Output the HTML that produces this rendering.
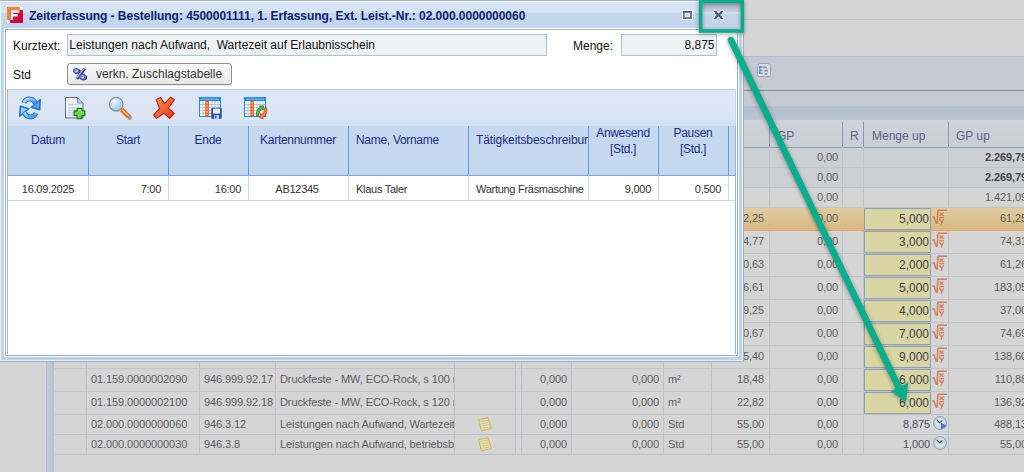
<!DOCTYPE html>
<html><head><meta charset="utf-8">
<style>
*{box-sizing:border-box;margin:0;padding:0}
html,body{width:1024px;height:472px;overflow:hidden}
body{position:relative;background:#d5d5d5;font-family:"Liberation Sans",sans-serif;font-size:11px;color:#5a5a5a}
.a{position:absolute}
.t{position:absolute;white-space:nowrap;line-height:14px}
.bd{font-weight:bold}
.dt{font-size:11px;letter-spacing:-0.28px;color:#333}
.bgt{font-size:11px;letter-spacing:-0.1px;color:#5c5c5c}
.hd{font-size:12px;letter-spacing:-0.3px;color:#1c2c86}
.bh{font-size:12px;color:#5d6382}
</style></head><body>

<div class="a" style="left:0px;top:19px;width:1024px;height:1px;background:#bcc4cf"></div>
<div class="a" style="left:0px;top:56px;width:1024px;height:1px;background:#b4bdcb"></div>
<div class="a" style="left:0px;top:57px;width:1024px;height:31px;background:#c5c9d1"></div>
<div class="a" style="left:0px;top:88px;width:1024px;height:1px;background:#d0d2d6"></div>
<div class="a" style="left:0px;top:89px;width:1024px;height:1px;background:#c3bfc3"></div>
<div class="a" style="left:0px;top:90px;width:1024px;height:1px;background:#8191b0"></div>
<div class="a" style="left:0px;top:91px;width:1024px;height:15px;background:#c5cad3"></div>
<div class="a" style="left:0px;top:106px;width:1024px;height:14px;background:linear-gradient(#b3becf,#bcc5d2)"></div>
<div class="a" style="left:0px;top:120px;width:1024px;height:1px;background:#cfd2d7"></div>
<div class="a" style="left:46px;top:121px;width:8px;height:351px;background:linear-gradient(90deg,#b3b9c1 0,#c3cbd6 20%,#bac4d0 80%,#b7bdc5 100%)"></div>
<div class="a" style="left:54px;top:121px;width:970px;height:26px;background:linear-gradient(#d0d3d9,#c9cdd4)"></div>
<div class="a" style="left:54px;top:147px;width:970px;height:1px;background:#8f9fbb"></div>
<div class="a" style="left:55px;top:148px;width:969px;height:39px;background:#cdd0d3"></div>
<div class="a" style="left:55px;top:208px;width:969px;height:22px;background:linear-gradient(#e0cba0,#d9b985)"></div>
<div class="a" style="left:55px;top:230px;width:969px;height:1px;background:#e3a465"></div>
<div class="a" style="left:55px;top:167px;width:969px;height:1px;background:#bfc3cb"></div>
<div class="a" style="left:55px;top:187px;width:969px;height:1px;background:#bfc3cb"></div>
<div class="a" style="left:55px;top:207px;width:969px;height:1px;background:#bfc3cb"></div>
<div class="a" style="left:55px;top:253px;width:969px;height:1px;background:#bfc3cb"></div>
<div class="a" style="left:55px;top:276px;width:969px;height:1px;background:#bfc3cb"></div>
<div class="a" style="left:55px;top:299px;width:969px;height:1px;background:#bfc3cb"></div>
<div class="a" style="left:55px;top:322px;width:969px;height:1px;background:#bfc3cb"></div>
<div class="a" style="left:55px;top:345px;width:969px;height:1px;background:#bfc3cb"></div>
<div class="a" style="left:55px;top:368px;width:969px;height:1px;background:#bfc3cb"></div>
<div class="a" style="left:55px;top:391px;width:969px;height:1px;background:#bfc3cb"></div>
<div class="a" style="left:55px;top:414px;width:969px;height:1px;background:#bfc3cb"></div>
<div class="a" style="left:55px;top:434px;width:969px;height:1px;background:#bfc3cb"></div>
<div class="a" style="left:55px;top:454px;width:969px;height:1px;background:#bfc3cb"></div>
<div class="a" style="left:86px;top:148px;width:1px;height:60px;background:#bfc3cb"></div>
<div class="a" style="left:86px;top:231px;width:1px;height:224px;background:#bfc3cb"></div>
<div class="a" style="left:199px;top:148px;width:1px;height:60px;background:#bfc3cb"></div>
<div class="a" style="left:199px;top:231px;width:1px;height:224px;background:#bfc3cb"></div>
<div class="a" style="left:275px;top:148px;width:1px;height:60px;background:#bfc3cb"></div>
<div class="a" style="left:275px;top:231px;width:1px;height:224px;background:#bfc3cb"></div>
<div class="a" style="left:454px;top:148px;width:1px;height:60px;background:#bfc3cb"></div>
<div class="a" style="left:454px;top:231px;width:1px;height:224px;background:#bfc3cb"></div>
<div class="a" style="left:515px;top:148px;width:1px;height:60px;background:#bfc3cb"></div>
<div class="a" style="left:515px;top:231px;width:1px;height:224px;background:#bfc3cb"></div>
<div class="a" style="left:521px;top:148px;width:1px;height:60px;background:#bfc3cb"></div>
<div class="a" style="left:521px;top:231px;width:1px;height:224px;background:#bfc3cb"></div>
<div class="a" style="left:571px;top:148px;width:1px;height:60px;background:#bfc3cb"></div>
<div class="a" style="left:571px;top:231px;width:1px;height:224px;background:#bfc3cb"></div>
<div class="a" style="left:663px;top:148px;width:1px;height:60px;background:#bfc3cb"></div>
<div class="a" style="left:663px;top:231px;width:1px;height:224px;background:#bfc3cb"></div>
<div class="a" style="left:711px;top:148px;width:1px;height:60px;background:#bfc3cb"></div>
<div class="a" style="left:711px;top:231px;width:1px;height:224px;background:#bfc3cb"></div>
<div class="a" style="left:769px;top:148px;width:1px;height:60px;background:#bfc3cb"></div>
<div class="a" style="left:769px;top:231px;width:1px;height:224px;background:#bfc3cb"></div>
<div class="a" style="left:842px;top:148px;width:1px;height:60px;background:#bfc3cb"></div>
<div class="a" style="left:842px;top:231px;width:1px;height:224px;background:#bfc3cb"></div>
<div class="a" style="left:863px;top:148px;width:1px;height:60px;background:#bfc3cb"></div>
<div class="a" style="left:863px;top:231px;width:1px;height:224px;background:#bfc3cb"></div>
<div class="a" style="left:948px;top:148px;width:1px;height:60px;background:#bfc3cb"></div>
<div class="a" style="left:948px;top:231px;width:1px;height:224px;background:#bfc3cb"></div>
<div class="a" style="left:769px;top:121px;width:1px;height:27px;background:#cbcfd5"></div>
<div class="a" style="left:769px;top:122px;width:1px;height:25px;background:#8797b5"></div>
<div class="a" style="left:842px;top:121px;width:1px;height:27px;background:#cbcfd5"></div>
<div class="a" style="left:842px;top:122px;width:1px;height:25px;background:#8797b5"></div>
<div class="a" style="left:863px;top:121px;width:1px;height:27px;background:#cbcfd5"></div>
<div class="a" style="left:863px;top:122px;width:1px;height:25px;background:#8797b5"></div>
<div class="a" style="left:948px;top:121px;width:1px;height:27px;background:#cbcfd5"></div>
<div class="a" style="left:948px;top:122px;width:1px;height:25px;background:#8797b5"></div>
<div class="t bh" style="left:777px;top:129px;">GP</div>
<div class="t bh" style="left:850px;top:129px;">R</div>
<div class="t bh" style="left:872px;top:129px;">Menge up</div>
<div class="t bh" style="left:956px;top:129px;">GP up</div>
<div class="t bgt" style="right:186px;top:150px;">0,00</div>
<div class="t bgt" style="right:186px;top:170px;">0,00</div>
<div class="t bgt" style="right:186px;top:190px;">0,00</div>
<div class="t bgt bd" style="right:-3px;top:150px;color:#444">2.269,79</div>
<div class="t bgt bd" style="right:-3px;top:170px;color:#444">2.269,79</div>
<div class="t bgt" style="right:-3px;top:190px;">1.421,09</div>
<div class="t bgt" style="right:260px;top:211px;">2,25</div>
<div class="t bgt" style="right:186px;top:211px;">0,00</div>
<div class="a" style="left:864px;top:208px;width:67px;height:22px;background:#d9d6a3;border:1px solid #8d9fb7"></div>
<svg class="a" style="left:932px;top:209px" width="16" height="16" viewBox="0 0 16 16">
<path d="M0.3 8.4 L1.8 7.6 L4.2 14.2 L5.2 14.2 L5.8 1.2 L15 1.2" fill="none" stroke="#d47f56" stroke-width="1.5" stroke-linejoin="bevel"/>
<path d="M7.6 3.6 L11.4 7 M11.4 3.6 L7.6 7" stroke="#d47f56" stroke-width="1.3"/>
<rect x="7.2" y="8.1" width="4.8" height="1.3" fill="#d47f56"/>
<path d="M7.4 10.2 L9.5 13 M11.6 10.2 L8.8 15.6" stroke="#d47f56" stroke-width="1.3"/>
</svg>
<div class="t bgt" style="right:95px;top:212px;font-size:12px;letter-spacing:0;color:#3d3f4d">5,000</div>
<div class="t bgt" style="right:-3px;top:211px;">61,25</div>
<div class="t bgt" style="right:260px;top:234px;">4,77</div>
<div class="t bgt" style="right:186px;top:234px;">0,00</div>
<div class="a" style="left:864px;top:231px;width:67px;height:22px;background:#d9d6a3;border:1px solid #8d9fb7"></div>
<svg class="a" style="left:932px;top:232px" width="16" height="16" viewBox="0 0 16 16">
<path d="M0.3 8.4 L1.8 7.6 L4.2 14.2 L5.2 14.2 L5.8 1.2 L15 1.2" fill="none" stroke="#d47f56" stroke-width="1.5" stroke-linejoin="bevel"/>
<path d="M7.6 3.6 L11.4 7 M11.4 3.6 L7.6 7" stroke="#d47f56" stroke-width="1.3"/>
<rect x="7.2" y="8.1" width="4.8" height="1.3" fill="#d47f56"/>
<path d="M7.4 10.2 L9.5 13 M11.6 10.2 L8.8 15.6" stroke="#d47f56" stroke-width="1.3"/>
</svg>
<div class="t bgt" style="right:95px;top:235px;font-size:12px;letter-spacing:0;color:#3d3f4d">3,000</div>
<div class="t bgt" style="right:-3px;top:234px;">74,31</div>
<div class="t bgt" style="right:260px;top:257px;">0,63</div>
<div class="t bgt" style="right:186px;top:257px;">0,00</div>
<div class="a" style="left:864px;top:254px;width:67px;height:22px;background:#d9d6a3;border:1px solid #8d9fb7"></div>
<svg class="a" style="left:932px;top:255px" width="16" height="16" viewBox="0 0 16 16">
<path d="M0.3 8.4 L1.8 7.6 L4.2 14.2 L5.2 14.2 L5.8 1.2 L15 1.2" fill="none" stroke="#d47f56" stroke-width="1.5" stroke-linejoin="bevel"/>
<path d="M7.6 3.6 L11.4 7 M11.4 3.6 L7.6 7" stroke="#d47f56" stroke-width="1.3"/>
<rect x="7.2" y="8.1" width="4.8" height="1.3" fill="#d47f56"/>
<path d="M7.4 10.2 L9.5 13 M11.6 10.2 L8.8 15.6" stroke="#d47f56" stroke-width="1.3"/>
</svg>
<div class="t bgt" style="right:95px;top:258px;font-size:12px;letter-spacing:0;color:#3d3f4d">2,000</div>
<div class="t bgt" style="right:-3px;top:257px;">61,26</div>
<div class="t bgt" style="right:260px;top:280px;">6,61</div>
<div class="t bgt" style="right:186px;top:280px;">0,00</div>
<div class="a" style="left:864px;top:277px;width:67px;height:22px;background:#d9d6a3;border:1px solid #8d9fb7"></div>
<svg class="a" style="left:932px;top:278px" width="16" height="16" viewBox="0 0 16 16">
<path d="M0.3 8.4 L1.8 7.6 L4.2 14.2 L5.2 14.2 L5.8 1.2 L15 1.2" fill="none" stroke="#d47f56" stroke-width="1.5" stroke-linejoin="bevel"/>
<path d="M7.6 3.6 L11.4 7 M11.4 3.6 L7.6 7" stroke="#d47f56" stroke-width="1.3"/>
<rect x="7.2" y="8.1" width="4.8" height="1.3" fill="#d47f56"/>
<path d="M7.4 10.2 L9.5 13 M11.6 10.2 L8.8 15.6" stroke="#d47f56" stroke-width="1.3"/>
</svg>
<div class="t bgt" style="right:95px;top:281px;font-size:12px;letter-spacing:0;color:#3d3f4d">5,000</div>
<div class="t bgt" style="right:-3px;top:280px;">183,05</div>
<div class="t bgt" style="right:260px;top:303px;">9,25</div>
<div class="t bgt" style="right:186px;top:303px;">0,00</div>
<div class="a" style="left:864px;top:300px;width:67px;height:22px;background:#d9d6a3;border:1px solid #8d9fb7"></div>
<svg class="a" style="left:932px;top:301px" width="16" height="16" viewBox="0 0 16 16">
<path d="M0.3 8.4 L1.8 7.6 L4.2 14.2 L5.2 14.2 L5.8 1.2 L15 1.2" fill="none" stroke="#d47f56" stroke-width="1.5" stroke-linejoin="bevel"/>
<path d="M7.6 3.6 L11.4 7 M11.4 3.6 L7.6 7" stroke="#d47f56" stroke-width="1.3"/>
<rect x="7.2" y="8.1" width="4.8" height="1.3" fill="#d47f56"/>
<path d="M7.4 10.2 L9.5 13 M11.6 10.2 L8.8 15.6" stroke="#d47f56" stroke-width="1.3"/>
</svg>
<div class="t bgt" style="right:95px;top:304px;font-size:12px;letter-spacing:0;color:#3d3f4d">4,000</div>
<div class="t bgt" style="right:-3px;top:303px;">37,00</div>
<div class="t bgt" style="right:260px;top:326px;">0,67</div>
<div class="t bgt" style="right:186px;top:326px;">0,00</div>
<div class="a" style="left:864px;top:323px;width:67px;height:22px;background:#d9d6a3;border:1px solid #8d9fb7"></div>
<svg class="a" style="left:932px;top:324px" width="16" height="16" viewBox="0 0 16 16">
<path d="M0.3 8.4 L1.8 7.6 L4.2 14.2 L5.2 14.2 L5.8 1.2 L15 1.2" fill="none" stroke="#d47f56" stroke-width="1.5" stroke-linejoin="bevel"/>
<path d="M7.6 3.6 L11.4 7 M11.4 3.6 L7.6 7" stroke="#d47f56" stroke-width="1.3"/>
<rect x="7.2" y="8.1" width="4.8" height="1.3" fill="#d47f56"/>
<path d="M7.4 10.2 L9.5 13 M11.6 10.2 L8.8 15.6" stroke="#d47f56" stroke-width="1.3"/>
</svg>
<div class="t bgt" style="right:95px;top:327px;font-size:12px;letter-spacing:0;color:#3d3f4d">7,000</div>
<div class="t bgt" style="right:-3px;top:326px;">74,69</div>
<div class="t bgt" style="right:260px;top:349px;">5,40</div>
<div class="t bgt" style="right:186px;top:349px;">0,00</div>
<div class="a" style="left:864px;top:346px;width:67px;height:22px;background:#d9d6a3;border:1px solid #8d9fb7"></div>
<svg class="a" style="left:932px;top:347px" width="16" height="16" viewBox="0 0 16 16">
<path d="M0.3 8.4 L1.8 7.6 L4.2 14.2 L5.2 14.2 L5.8 1.2 L15 1.2" fill="none" stroke="#d47f56" stroke-width="1.5" stroke-linejoin="bevel"/>
<path d="M7.6 3.6 L11.4 7 M11.4 3.6 L7.6 7" stroke="#d47f56" stroke-width="1.3"/>
<rect x="7.2" y="8.1" width="4.8" height="1.3" fill="#d47f56"/>
<path d="M7.4 10.2 L9.5 13 M11.6 10.2 L8.8 15.6" stroke="#d47f56" stroke-width="1.3"/>
</svg>
<div class="t bgt" style="right:95px;top:350px;font-size:12px;letter-spacing:0;color:#3d3f4d">9,000</div>
<div class="t bgt" style="right:-3px;top:349px;">138,60</div>
<div class="t bgt" style="left:91px;top:372px;">01.159.0000002090</div>
<div class="t bgt" style="left:204px;top:372px;">946.999.92.17</div>
<div class="a" style="left:276px;top:368px;width:178px;height:23px;overflow:hidden"><div class="t bgt" style="left:4px;top:4px">Druckfeste - MW, ECO-Rock, s 100 r</div></div>
<div class="t bgt" style="right:457px;top:372px;">0,000</div>
<div class="t bgt" style="right:365px;top:372px;">0,000</div>
<div class="t bgt" style="left:668px;top:372px;">m²</div>
<div class="t bgt" style="right:260px;top:372px;">18,48</div>
<div class="t bgt" style="right:186px;top:372px;">0,00</div>
<div class="a" style="left:864px;top:369px;width:67px;height:22px;background:#d9d6a3;border:1px solid #8d9fb7"></div>
<svg class="a" style="left:932px;top:370px" width="16" height="16" viewBox="0 0 16 16">
<path d="M0.3 8.4 L1.8 7.6 L4.2 14.2 L5.2 14.2 L5.8 1.2 L15 1.2" fill="none" stroke="#d47f56" stroke-width="1.5" stroke-linejoin="bevel"/>
<path d="M7.6 3.6 L11.4 7 M11.4 3.6 L7.6 7" stroke="#d47f56" stroke-width="1.3"/>
<rect x="7.2" y="8.1" width="4.8" height="1.3" fill="#d47f56"/>
<path d="M7.4 10.2 L9.5 13 M11.6 10.2 L8.8 15.6" stroke="#d47f56" stroke-width="1.3"/>
</svg>
<div class="t bgt" style="right:95px;top:373px;font-size:12px;letter-spacing:0;color:#3d3f4d">6,000</div>
<div class="t bgt" style="right:-3px;top:372px;">110,88</div>
<div class="t bgt" style="left:91px;top:395px;">01.159.0000002100</div>
<div class="t bgt" style="left:204px;top:395px;">946.999.92.18</div>
<div class="a" style="left:276px;top:391px;width:178px;height:23px;overflow:hidden"><div class="t bgt" style="left:4px;top:4px">Druckfeste - MW, ECO-Rock, s 120 r</div></div>
<div class="t bgt" style="right:457px;top:395px;">0,000</div>
<div class="t bgt" style="right:365px;top:395px;">0,000</div>
<div class="t bgt" style="left:668px;top:395px;">m²</div>
<div class="t bgt" style="right:260px;top:395px;">22,82</div>
<div class="t bgt" style="right:186px;top:395px;">0,00</div>
<div class="a" style="left:864px;top:392px;width:67px;height:22px;background:#d9d6a3;border:1px solid #8d9fb7"></div>
<svg class="a" style="left:932px;top:393px" width="16" height="16" viewBox="0 0 16 16">
<path d="M0.3 8.4 L1.8 7.6 L4.2 14.2 L5.2 14.2 L5.8 1.2 L15 1.2" fill="none" stroke="#d47f56" stroke-width="1.5" stroke-linejoin="bevel"/>
<path d="M7.6 3.6 L11.4 7 M11.4 3.6 L7.6 7" stroke="#d47f56" stroke-width="1.3"/>
<rect x="7.2" y="8.1" width="4.8" height="1.3" fill="#d47f56"/>
<path d="M7.4 10.2 L9.5 13 M11.6 10.2 L8.8 15.6" stroke="#d47f56" stroke-width="1.3"/>
</svg>
<div class="t bgt" style="right:95px;top:396px;font-size:12px;letter-spacing:0;color:#3d3f4d">6,000</div>
<div class="t bgt" style="right:-3px;top:395px;">136,92</div>
<div class="t bgt" style="left:91px;top:417px;">02.000.0000000060</div>
<div class="t bgt" style="left:204px;top:417px;">946.3.12</div>
<div class="a" style="left:276px;top:414px;width:178px;height:20px;overflow:hidden"><div class="t bgt" style="left:4px;top:3px">Leistungen nach Aufwand, Wartezeit auf</div></div>
<svg class="a" style="left:477px;top:417px" width="16" height="15" viewBox="0 0 16 15">
<path d="M1.5 2.5 L11 0.8 L14.5 11.5 L4.5 13.8 Z" fill="#e2ddb2" stroke="#d4b843" stroke-width="0.9"/>
<path d="M3.5 4.5 L11 3 M4.2 6.8 L11.8 5.3 M5 9.1 L12.5 7.6 M5.6 11.3 L13.2 9.9" stroke="#c9b878" stroke-width="0.6"/>
</svg>
<div class="t bgt" style="right:457px;top:417px;">0,000</div>
<div class="t bgt" style="right:365px;top:417px;">0,000</div>
<div class="t bgt" style="left:668px;top:417px;">Std</div>
<div class="t bgt" style="right:260px;top:417px;">55,00</div>
<div class="t bgt" style="right:186px;top:417px;">0,00</div>
<div class="t bgt" style="right:94px;top:417px;color:#4e5060">8,875</div>
<svg class="a" style="left:933px;top:416px" width="15" height="16" viewBox="0 0 15 16">
<circle cx="7" cy="7" r="6.4" fill="#c6dae6" stroke="#8f9ba6" stroke-width="1"/>
<circle cx="6.6" cy="6.6" r="4.2" fill="#d3e4ee"/>
<path d="M3.8 3.8 L6.6 6.8 L9.4 4.4" fill="none" stroke="#3f4852" stroke-width="1.1"/>
<path d="M7.8 6.6 L14 10 L7.8 13.6 Z" fill="#6d6bcc"/>
</svg>
<div class="t bgt" style="right:-3px;top:417px;">488,13</div>
<div class="t bgt" style="left:91px;top:437px;">02.000.0000000030</div>
<div class="t bgt" style="left:204px;top:437px;">946.3.8</div>
<div class="a" style="left:276px;top:434px;width:178px;height:20px;overflow:hidden"><div class="t bgt" style="left:4px;top:3px">Leistungen nach Aufwand, betriebsbedingt</div></div>
<svg class="a" style="left:477px;top:437px" width="16" height="15" viewBox="0 0 16 15">
<path d="M1.5 2.5 L11 0.8 L14.5 11.5 L4.5 13.8 Z" fill="#e2ddb2" stroke="#d4b843" stroke-width="0.9"/>
<path d="M3.5 4.5 L11 3 M4.2 6.8 L11.8 5.3 M5 9.1 L12.5 7.6 M5.6 11.3 L13.2 9.9" stroke="#c9b878" stroke-width="0.6"/>
</svg>
<div class="t bgt" style="right:457px;top:437px;">0,000</div>
<div class="t bgt" style="right:365px;top:437px;">0,000</div>
<div class="t bgt" style="left:668px;top:437px;">Std</div>
<div class="t bgt" style="right:260px;top:437px;">55,00</div>
<div class="t bgt" style="right:186px;top:437px;">0,00</div>
<div class="t bgt" style="right:94px;top:437px;color:#4e5060">1,000</div>
<svg class="a" style="left:933px;top:436px" width="15" height="16" viewBox="0 0 15 16">
<circle cx="7" cy="7" r="6.4" fill="#c6dae6" stroke="#8f9ba6" stroke-width="1"/>
<circle cx="6.6" cy="6.6" r="4.2" fill="#d3e4ee"/>
<path d="M3.8 3.8 L6.6 6.8 L9.4 4.4" fill="none" stroke="#3f4852" stroke-width="1.1"/>

</svg>
<div class="t bgt" style="right:-3px;top:437px;">55,00</div>
<svg class="a" style="left:757px;top:63px" width="14" height="14" viewBox="0 0 14 14">
<rect x="0.5" y="0.5" width="13" height="13" rx="2" fill="#d9dde4" stroke="#97a4c0"/>
<path d="M2.8 2.8 V6 M2.8 4.1 H5.4 M2.8 6.2 V10.2 H5.8 M2.8 7.3 H5.4" fill="none" stroke="#3f7fd0" stroke-width="1.1"/>
<rect x="6" y="3.6" width="3.8" height="1.6" fill="#8a9096"/><rect x="7.4" y="6.8" width="3.6" height="1.8" fill="#8a9096"/><rect x="7.4" y="10" width="3.2" height="1.6" fill="#8a9096"/>
</svg>
<div class="a" style="left:0px;top:0px;width:744px;height:362px;background:#bed3ec;border-radius:3px 3px 2px 2px"></div>
<div class="a" style="left:0px;top:0px;width:744px;height:1px;background:#9fb1cc;border-radius:3px 3px 0 0"></div>
<div class="a" style="left:743px;top:0px;width:1px;height:362px;background:#9cb0cc"></div>
<div class="a" style="left:0px;top:361px;width:744px;height:1px;background:#9cb0cc"></div>
<div class="a" style="left:0px;top:360px;width:743px;height:1px;background:#e9f0f8"></div>
<div class="a" style="left:742px;top:1px;width:1px;height:360px;background:#e9f0f8"></div>
<div class="a" style="left:0px;top:1px;width:1px;height:360px;background:#eef3fa"></div>
<div class="a" style="left:1px;top:1px;width:742px;height:1px;background:#fbfcfe"></div>
<div class="a" style="left:1px;top:2px;width:742px;height:11px;background:#d6e3f4"></div>
<div class="a" style="left:1px;top:13px;width:742px;height:15px;background:#c3d6ee"></div>
<div class="a" style="left:4px;top:28px;width:735px;height:329px;background:#fff"></div>
<div class="a" style="left:5px;top:29px;width:733px;height:327px;background:#fff;border:1px solid #9eb0cb"></div>
<svg class="a" style="left:7px;top:7px" width="16" height="16" viewBox="0 0 16 16">
<rect x="0" y="0" width="13" height="13" fill="#ef8a2a"/>
<rect x="3" y="3" width="13" height="13" fill="#d2063f"/>
<rect x="13" y="0" width="3" height="3" fill="#fff"/>
<rect x="0" y="13" width="3" height="3" fill="#fff"/>
<path d="M3.6 3.2h8.9v2.5h-6.4v1.4h4.4v2.4h-4.4v3.6h-2.5z" fill="#fff"/>
</svg>
<div class="t bd" style="left:29px;top:9px;font-size:12px;color:#0f2170;letter-spacing:-0.03px">Zeiterfassung - Bestellung: 4500001111, 1. Erfassung, Ext. Leist.-Nr.: 02.000.0000000060</div>
<svg class="a" style="left:682px;top:10px" width="11" height="10" viewBox="0 0 11 10">
<rect x="0" y="0" width="11" height="10" fill="#fff"/>
<rect x="1" y="1" width="9" height="8" fill="#6a7b9d"/>
<rect x="1" y="1" width="9" height="1.2" fill="#4a5c7e"/>
<rect x="2.8" y="3.1" width="5.2" height="3.9" fill="#fff"/>
<rect x="3.8" y="4.1" width="3.2" height="1.9" fill="#c3d2e8"/>
</svg>
<div class="a" style="left:702px;top:3px;width:39px;height:9px;background:linear-gradient(#aab5c6,#c4d0e1)"></div>
<div class="a" style="left:702px;top:12px;width:39px;height:2px;background:#d3dff0"></div>
<div class="a" style="left:702px;top:14px;width:39px;height:15px;background:#c3d4eb"></div>
<svg class="a" style="left:711px;top:9px" width="15" height="12" viewBox="0 0 15 12">
<path d="M4.2 3.1 L10.8 8.9 M10.8 3.1 L4.2 8.9" stroke="#fff" stroke-width="3.8" stroke-linecap="square"/>
<path d="M2.6 2.2 H5.6 M9.4 2.2 H12.4 M2.6 9.8 H5.6 M9.4 9.8 H12.4" stroke="#fff" stroke-width="3"/>
<path d="M4.2 3.1 L10.8 8.9 M10.8 3.1 L4.2 8.9" stroke="#4b5a77" stroke-width="2.1"/>
<path d="M2.8 2.3 H5.6 M9.4 2.3 H12.2 M2.8 9.7 H5.6 M9.4 9.7 H12.2" stroke="#4b5a77" stroke-width="1.3"/>
</svg>
<div class="t " style="left:13px;top:39px;font-size:12px;color:#111">Kurztext:</div>
<div class="a" style="left:67px;top:34px;width:480px;height:22px;background:#eff2f4;border:1px solid #a9c0df"></div>
<div class="t " style="left:69.3px;top:38px;font-size:12px;color:#111">Leistungen nach Aufwand,&nbsp; Wartezeit auf Erlaubnisschein</div>
<div class="t " style="left:573px;top:39px;font-size:12px;color:#111">Menge:</div>
<div class="a" style="left:621px;top:34px;width:96px;height:22px;background:#eff2f4;border:1px solid #a9c0df"></div>
<div class="t " style="right:309.5px;top:38px;font-size:12px;color:#111">8,875</div>
<div class="t " style="left:13px;top:68px;font-size:12px;color:#111">Std</div>
<div class="a" style="left:67px;top:63px;width:165px;height:22px;background:linear-gradient(#fafafa,#e7e7e7);border:1px solid #8f8f8f;border-radius:3px;box-shadow:0 1px 0 rgba(0,0,0,0.08)"></div>
<svg class="a" style="left:72px;top:67px" width="17" height="14" viewBox="0 0 17 14">
<g transform="translate(1.2,0.6)" fill="none" stroke="#3a3e92" stroke-width="1.7">
<ellipse cx="4.2" cy="3.9" rx="2.4" ry="2"/>
<ellipse cx="10.4" cy="9.9" rx="2.6" ry="2.1"/>
<path d="M12 1.3 L4.2 11.6"/>
</g>
<g fill="none" stroke="#5b60bf" stroke-width="1.7">
<ellipse cx="4.2" cy="3.9" rx="2.4" ry="2"/>
<ellipse cx="10.4" cy="9.9" rx="2.6" ry="2.1"/>
<path d="M12 1.3 L4.2 11.6"/>
</g>
<g fill="none" stroke="#f2f3ff" stroke-width="0.6">
<ellipse cx="4.2" cy="3.9" rx="1.4" ry="1.1"/>
<ellipse cx="10.4" cy="9.9" rx="1.6" ry="1.2"/>
<path d="M11.6 1.8 L4.8 10.8"/>
</g>
</svg>
<div class="t " style="left:96px;top:67px;font-size:12px;color:#333">verkn. Zuschlagstabelle</div>
<div class="a" style="left:7px;top:89px;width:729px;height:37px;background:linear-gradient(#dde7f5 0,#dbe5f4 82%,#d3e0f1 82%,#d3e0f1 100%);border-top:1px solid #bccde3;border-right:1px solid #c8d6e8"></div>
<div class="a" style="left:7px;top:89px;width:1px;height:265px;background:#9fb3d0"></div>
<div class="a" style="left:735px;top:126px;width:1px;height:228px;background:#9fb3d0"></div>
<svg class="a" style="left:16px;top:94px" width="28" height="28" viewBox="0 0 28 28">
<defs>
<linearGradient id="gb" x1="0" y1="0" x2="1" y2="1"><stop offset="0" stop-color="#b8defc"/><stop offset="1" stop-color="#3f93ea"/></linearGradient>
<linearGradient id="gb2" x1="1" y1="1" x2="0" y2="0"><stop offset="0" stop-color="#3f93ea"/><stop offset="1" stop-color="#b8defc"/></linearGradient>
</defs>
<path d="M8 8.8 A6 6 0 0 1 19.4 9.6" fill="none" stroke="#2273dc" stroke-width="4.8"/>
<path d="M24.4 5.4 L15 13.4 L23.8 16 Z" fill="#2273dc" stroke="#2273dc" stroke-width="1.2" stroke-linejoin="round"/>
<path d="M8 8.8 A6 6 0 0 1 19.4 9.6" fill="none" stroke="url(#gb)" stroke-width="2.8"/>
<path d="M23.3 7.4 L16.8 13 L22.8 14.6 Z" fill="#5aa6ee"/>
<path d="M20 19.2 A6 6 0 0 1 8.6 18.4" fill="none" stroke="#2273dc" stroke-width="4.8"/>
<path d="M3.6 22.6 L13 14.6 L4.2 12 Z" fill="#2273dc" stroke="#2273dc" stroke-width="1.2" stroke-linejoin="round"/>
<path d="M20 19.2 A6 6 0 0 1 8.6 18.4" fill="none" stroke="url(#gb2)" stroke-width="2.8"/>
<path d="M4.7 20.6 L11.2 15 L5.2 13.4 Z" fill="#9fd0f8"/>
</svg>
<svg class="a" style="left:61px;top:94px" width="28" height="28" viewBox="0 0 28 28">
<path d="M4.5 3.5 H16.5 L22 9 V24 H4.5 Z" fill="#f3f4f6" stroke="#5d6f8e" stroke-width="1"/>
<path d="M16.5 3.5 V9 H22" fill="#b9d3ee" stroke="#5d6f8e" stroke-width="0.8"/>
<path d="M7.5 10.6 H18.5 M7.5 13.8 H18 M7.5 16.2 H15 M7.5 18.6 H14 M7.5 21 H14" stroke="#b3c9ea" stroke-width="1.6" stroke-dasharray="1.2 0.5"/>
<path d="M16.2 14.5 H20.8 V17 H23.8 V21.6 H20.8 V24.6 H16.2 V21.6 H13.2 V17 H16.2 Z" fill="#6fd84a" stroke="#1d7d1d" stroke-width="1.3" stroke-linejoin="round"/>
<path d="M17 16 H20 V18 H22.5" fill="none" stroke="#b8f59a" stroke-width="0.8"/>
</svg>
<svg class="a" style="left:106px;top:94px" width="28" height="28" viewBox="0 0 28 28">
<defs><radialGradient id="lens" cx="0.35" cy="0.3" r="0.8"><stop offset="0" stop-color="#eef7ff"/><stop offset="1" stop-color="#8ec3ee"/></radialGradient>
<linearGradient id="hdl" x1="0" y1="0" x2="1" y2="-1"><stop offset="0" stop-color="#f25a10"/><stop offset="0.5" stop-color="#fbd66a"/><stop offset="1" stop-color="#f25a10"/></linearGradient></defs>
<path d="M22.6 22.4 L23.8 23.6" stroke="#9a9a9a" stroke-width="4.4" stroke-linecap="round"/>
<path d="M15.6 15.6 L22.6 22.4" stroke="#f0641c" stroke-width="4.6"/>
<path d="M16.2 15.8 L22.4 21.8" stroke="#fcd27a" stroke-width="1.4"/>
<circle cx="10.2" cy="10.2" r="6.8" fill="url(#lens)" stroke="#8b8f93" stroke-width="1.3"/>
</svg>
<svg class="a" style="left:150px;top:94px" width="28" height="28" viewBox="0 0 28 28">
<defs><linearGradient id="rx" x1="0" y1="0" x2="1" y2="1"><stop offset="0" stop-color="#ff9a66"/><stop offset="1" stop-color="#e8380e"/></linearGradient></defs>
<path d="M6.2 5.6 L10.6 3.6 L14.6 9.6 L20.6 3.2 L24.4 5.6 L18.4 14.2 L24.2 19.6 L19.6 24.4 L13.8 19.2 L6.6 24.4 L3.6 21.2 L9.6 14.6 Z" fill="url(#rx)" stroke="#c81a0c" stroke-width="1.1" stroke-linejoin="round"/>
</svg>
<svg class="a" style="left:196px;top:94px" width="28" height="28" viewBox="0 0 28 28">
<rect x="3.5" y="3.5" width="21" height="19" fill="#fff" stroke="#1e8af2" stroke-width="1"/>
<rect x="4" y="4" width="20" height="3" fill="#1e8af2"/><rect x="5" y="4.6" width="18" height="0.9" fill="#8fcaf8"/>
<path d="M4 10.5 H24 M4 13.5 H24 M4 16.5 H24 M4 19.5 H24" stroke="#b9b7dc" stroke-width="0.9"/>
<path d="M7 7 V22 M16 7 V22 M19 7 V22 M22 7 V22" stroke="#b9b7dc" stroke-width="0.9"/>
<rect x="9.3" y="7" width="3.6" height="15" fill="#ff5616"/>
<path d="M11.1 8.3 V21" stroke="#ffc07a" stroke-width="1.6" stroke-dasharray="1.4 1.6"/>
<rect x="15.3" y="13.8" width="10.4" height="11" rx="1" fill="#2054b8"/>
<rect x="17" y="14.6" width="7" height="5" fill="#eef0f2"/>
<rect x="18.3" y="21" width="4.6" height="3.8" fill="#cfd4dc"/><rect x="19.2" y="21.6" width="1.2" height="2.6" fill="#2054b8"/>
</svg>
<svg class="a" style="left:241px;top:94px" width="28" height="28" viewBox="0 0 28 28">
<rect x="3.5" y="3.5" width="21" height="19" fill="#fff" stroke="#1e8af2" stroke-width="1"/>
<rect x="4" y="4" width="20" height="3" fill="#1e8af2"/><rect x="5" y="4.6" width="18" height="0.9" fill="#8fcaf8"/>
<path d="M4 10.5 H24 M4 13.5 H24 M4 16.5 H24 M4 19.5 H24" stroke="#b9b7dc" stroke-width="0.9"/>
<path d="M7 7 V22 M16 7 V22 M19 7 V22 M22 7 V22" stroke="#b9b7dc" stroke-width="0.9"/>
<rect x="9.3" y="7" width="3.6" height="15" fill="#ff5616"/>
<path d="M11.1 8.3 V21" stroke="#ffc07a" stroke-width="1.6" stroke-dasharray="1.4 1.6"/>
<path d="M15.6 22 C15 17 17 14 19.5 13.5 L18.5 12 L22.5 11.8 L22 16 L20.8 15 C19 16 17.8 18.5 17.5 22 Z" fill="#52c23c" stroke="#23851c" stroke-width="0.8"/>
<path d="M25.5 13.8 C26.5 18 25 22.5 21.5 23 L22.2 24.4 L18.6 23.8 L19.8 19.8 L20.6 20.8 C22.5 20 23.8 17.5 23.3 14.5 Z" fill="#ff8a2a" stroke="#e0301a" stroke-width="0.8"/>
</svg>
<div class="a" style="left:8px;top:126px;width:727px;height:49px;background:#c4d8f0"></div>
<div class="a" style="left:8px;top:175px;width:727px;height:1px;background:#7ea6dc"></div>
<div class="a" style="left:88px;top:126px;width:1px;height:49px;background:#6b9bd9"></div>
<div class="a" style="left:88px;top:176px;width:1px;height:24px;background:#cdd9ea"></div>
<div class="a" style="left:168px;top:126px;width:1px;height:49px;background:#6b9bd9"></div>
<div class="a" style="left:168px;top:176px;width:1px;height:24px;background:#cdd9ea"></div>
<div class="a" style="left:248px;top:126px;width:1px;height:49px;background:#6b9bd9"></div>
<div class="a" style="left:248px;top:176px;width:1px;height:24px;background:#cdd9ea"></div>
<div class="a" style="left:348px;top:126px;width:1px;height:49px;background:#6b9bd9"></div>
<div class="a" style="left:348px;top:176px;width:1px;height:24px;background:#cdd9ea"></div>
<div class="a" style="left:468px;top:126px;width:1px;height:49px;background:#6b9bd9"></div>
<div class="a" style="left:468px;top:176px;width:1px;height:24px;background:#cdd9ea"></div>
<div class="a" style="left:588px;top:126px;width:1px;height:49px;background:#6b9bd9"></div>
<div class="a" style="left:588px;top:176px;width:1px;height:24px;background:#cdd9ea"></div>
<div class="a" style="left:658px;top:126px;width:1px;height:49px;background:#6b9bd9"></div>
<div class="a" style="left:658px;top:176px;width:1px;height:24px;background:#cdd9ea"></div>
<div class="a" style="left:728px;top:126px;width:1px;height:49px;background:#6b9bd9"></div>
<div class="a" style="left:728px;top:176px;width:1px;height:24px;background:#cdd9ea"></div>
<div class="a" style="left:8px;top:200px;width:727px;height:1px;background:#cdd9ea"></div>
<div class="t hd" style="left:-52.0px;width:200px;text-align:center;top:133px;">Datum</div>
<div class="t hd" style="left:28.0px;width:200px;text-align:center;top:133px;">Start</div>
<div class="t hd" style="left:108.0px;width:200px;text-align:center;top:133px;">Ende</div>
<div class="t hd" style="left:198.0px;width:200px;text-align:center;top:133px;">Kartennummer</div>
<div class="t hd" style="left:356px;top:133px;">Name, Vorname</div>
<div class="a" style="left:469px;top:126px;width:119px;height:49px;overflow:hidden"><div class="t hd" style="left:7px;top:7px;letter-spacing:-0.1px">Tätigkeitsbeschreibung</div></div>
<div class="t hd" style="left:523.0px;width:200px;text-align:center;top:126px;">Anwesend</div>
<div class="t hd" style="left:523.0px;width:200px;text-align:center;top:142px;">[Std.]</div>
<div class="t hd" style="left:593.0px;width:200px;text-align:center;top:126px;">Pausen</div>
<div class="t hd" style="left:593.0px;width:200px;text-align:center;top:142px;">[Std.]</div>
<div class="t dt" style="left:-52.0px;width:200px;text-align:center;top:182px;">16.09.2025</div>
<div class="t dt" style="right:863px;top:182px;">7:00</div>
<div class="t dt" style="right:783px;top:182px;">16:00</div>
<div class="t dt" style="left:197.0px;width:200px;text-align:center;top:182px;">AB12345</div>
<div class="t dt" style="left:356px;top:182px;">Klaus Taler</div>
<div class="t dt" style="left:476px;top:182px;">Wartung Fräsmaschine</div>
<div class="t dt" style="right:373px;top:182px;">9,000</div>
<div class="t dt" style="right:303px;top:182px;">0,500</div>
<svg class="a" style="left:0;top:0;filter:drop-shadow(0 1px 2px rgba(0,0,0,0.4))" width="1024" height="472" viewBox="0 0 1024 472">
  <rect x="700.6" y="1.3" width="41.8" height="29.8" fill="none" stroke="#05ae8c" stroke-width="3.4"/>
  <line x1="731" y1="40" x2="899" y2="388" stroke="#05ae8c" stroke-width="6.4" stroke-linecap="round"/>
  <polygon points="906,402 891,391 908,383" fill="#05ae8c"/>
</svg>
</body></html>
